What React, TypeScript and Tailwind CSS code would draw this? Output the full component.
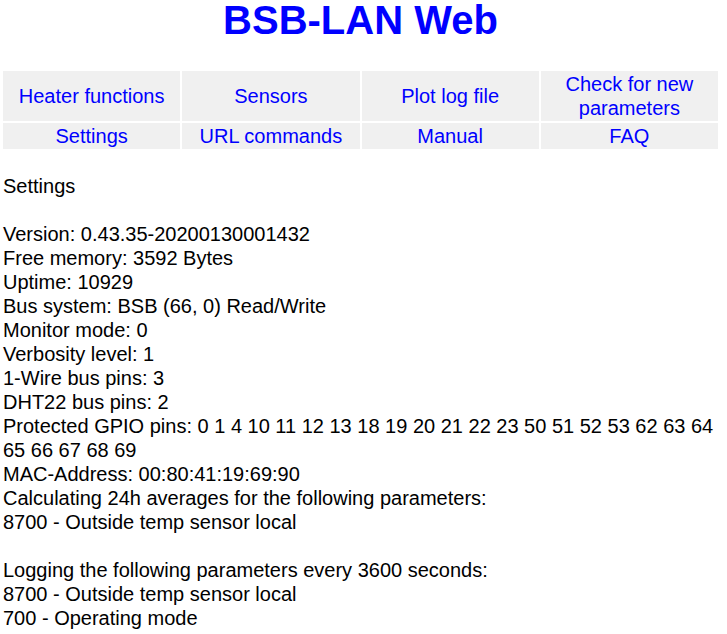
const menu = [
  ["Heater functions", "Sensors", "Plot log file", "Check for new parameters"],
  ["Settings", "URL commands", "Manual", "FAQ"],
];

const lines = [
  "Settings",
  "",
  "Version: 0.43.35-20200130001432",
  "Free memory: 3592 Bytes",
  "Uptime: 10929",
  "Bus system: BSB (66, 0) Read/Write",
  "Monitor mode: 0",
  "Verbosity level: 1",
  "1-Wire bus pins: 3",
  "DHT22 bus pins: 2",
  "Protected GPIO pins: 0 1 4 10 11 12 13 18 19 20 21 22 23 50 51 52 53 62 63 64 65 66 67 68 69",
  "MAC-Address: 00:80:41:19:69:90",
  "Calculating 24h averages for the following parameters:",
  "8700 - Outside temp sensor local",
  "",
  "Logging the following parameters every 3600 seconds:",
  "8700 - Outside temp sensor local",
  "700 - Operating mode",
];

export default function App() {
  return (
    <div
      className="bg-white min-h-[634px] text-black"
      style={{ fontFamily: '"Liberation Sans", Arial, sans-serif' }}
    >
      <div className="ml-[3px] w-[715px]">
        <h1 className="text-center text-[40px] leading-[40px] font-bold text-[#0000ff]">
          BSB-LAN Web
        </h1>

        <div className="mt-[31px] grid grid-cols-4 gap-[2px]">
          {menu.map((row, r) =>
            row.map((label) => (
              <a
                key={label}
                href="#"
                className={`flex items-center justify-center bg-[#f0f0f0] p-[1px] text-center text-[20px] leading-[24px] text-[#0000ff] ${
                  r === 0 ? "h-[50px]" : "h-[26px]"
                }`}
              >
                {label}
              </a>
            ))
          )}
        </div>

        <div className="mt-[25px] text-[20px] leading-[24px]">
          {lines.map((line, i) => (
            <div key={i} className="min-h-[24px]">
              {line}
            </div>
          ))}
        </div>
      </div>
    </div>
  );
}
